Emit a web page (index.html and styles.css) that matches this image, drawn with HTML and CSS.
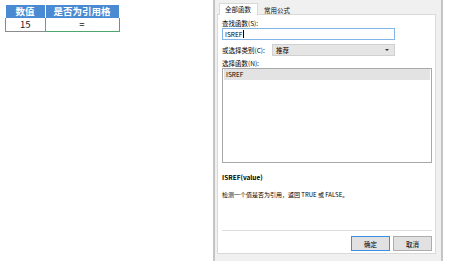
FILE: index.html
```html
<!DOCTYPE html>
<html lang="zh-CN">
<head>
    <meta charset="UTF-8">
    <meta name="viewport" content="width=device-width, initial-scale=1.0">
    <link rel="stylesheet" href="styles.css">
    <title>插入函数</title>
</head>
<body>
    <div class="sheet">
        <table class="grid">
            <tr>
                <th class="col-a">数值</th>
                <th class="col-b">是否为引用格</th>
            </tr>
            <tr>
                <td>15</td>
                <td class="active">=</td>
            </tr>
        </table>
    </div>

    <div class="dialog">
        <div class="tabs">
            <div class="tab tab-on">全部函数</div>
            <div class="tab">常用公式</div>
        </div>
        <div class="panel">
            <div class="lbl lbl-first">查找函数(S):</div>
            <div class="search">ISREF<span class="caret"></span></div>

            <div class="cat-row">
                <span class="lbl">或选择类别(C):</span>
                <div class="select">
                    <span>推荐</span>
                    <span class="arrow"></span>
                </div>
            </div>

            <div class="lbl lbl-list">选择函数(N):</div>
            <div class="list">
                <div class="item item-on">ISREF</div>
            </div>

            <div class="sig">ISREF(value)</div>
            <div class="desc">检测一个值是否为引用，返回 TRUE 或 FALSE。</div>

            <div class="sep"></div>
            <div class="buttons">
                <button class="btn btn-ok">确定</button>
                <button class="btn">取消</button>
            </div>
        </div>
    </div>
</body>
</html>
```

FILE: styles.css
```css
body {
    margin: 0;
    width: 450px;
    height: 261px;
    display: flex;
    background-color: #fff;
    font-family: "Noto Sans CJK SC", "Noto Sans", sans-serif;
    overflow: hidden;
}

/* spreadsheet part */
.sheet {
    width: 213px;
    padding: 5px 0 0 5px;
    box-sizing: border-box;
}

.grid {
    border-collapse: collapse;
    font-size: 9.5px;
}

.grid th {
    background-color: #4a8ad2;
    color: #fff;
    font-weight: bold;
    height: 13px;
    padding: 0;
    line-height: 13px;
    border-right: 1px solid #fff;
}

.col-a {
    width: 39px;
}

.col-b {
    width: 73px;
}

.grid td {
    height: 13px;
    padding: 0;
    line-height: 13px;
    text-align: center;
    color: #222;
    border-left: 1px solid #8c8c8c;
    border-bottom: 1px solid #8c8c8c;
}

.grid td.active {
    border-right: 1px solid #4ea56e;
    border-bottom: 1px solid #4ea56e;
}

/* dialog */
.dialog {
    width: 230px;
    height: 261px;
    box-sizing: border-box;
    background-color: #f0f0f0;
    border-left: 2px solid #c4c4c4;
    border-right: 2px solid #c4c4c4;
    padding: 0 5px 7px 2px;
    display: flex;
    flex-direction: column;
    font-size: 6.5px;
    color: #000;
}

.tabs {
    display: flex;
    height: 14px;
    padding-left: 2px;
    align-items: flex-end;
}

.tab {
    height: 10px;
    line-height: 10px;
    padding: 0 6px;
    color: #111;
    margin-bottom: -1px;
}

.tab-on {
    background-color: #fff;
    border: 1px solid #d9d9d9;
    border-bottom: none;
    height: 11px;
    padding: 0 6px 0 5px;
    position: relative;
    z-index: 1;
}

.panel {
    flex: 1;
    background-color: #fff;
    border: 1px solid #d9d9d9;
    padding: 0 3px 1px 4px;
    display: flex;
    flex-direction: column;
}

.lbl {
    height: 8px;
    line-height: 8px;
    white-space: nowrap;
}

.lbl-first {
    margin-top: 4px;
}

.search {
    margin-top: 1px;
    width: 173px;
    height: 12px;
    box-sizing: border-box;
    border: 1px solid #7fb5e8;
    line-height: 10px;
    padding-left: 2px;
    display: flex;
    align-items: center;
}

.caret {
    width: 1px;
    height: 8px;
    background-color: #000;
    margin-left: 1px;
}

.cat-row {
    margin-top: 4px;
    display: flex;
    align-items: center;
    width: 173px;
    justify-content: space-between;
}

.select {
    width: 123px;
    height: 12px;
    box-sizing: border-box;
    background-color: #e5e5e5;
    border: 1px solid #d0d0d0;
    display: flex;
    align-items: center;
    justify-content: space-between;
    padding: 0 5px 0 3px;
}

.arrow {
    width: 0;
    height: 0;
    border-left: 2px solid transparent;
    border-right: 2px solid transparent;
    border-top: 2px solid #333;
}

.lbl-list {
    margin-top: 3px;
}

.list {
    margin-top: 1px;
    height: 95px;
    box-sizing: border-box;
    border: 1px solid #a8a8a8;
    padding: 0 1px;
}

.item {
    height: 11px;
    line-height: 11px;
    padding-left: 2px;
}

.item-on {
    background-color: #e3e3e3;
}

.sig {
    margin-top: 10px;
    font-weight: bold;
    line-height: 8px;
}

.desc {
    margin-top: 10px;
    line-height: 8px;
    font-size: 6px;
}

.sep {
    margin-top: auto;
    height: 1px;
    background-color: #dcdcdc;
}

.buttons {
    margin-top: 5px;
    display: flex;
    justify-content: flex-end;
    gap: 3px;
    margin-bottom: 1px;
}

.btn {
    width: 39px;
    height: 15px;
    padding: 0;
    font-family: inherit;
    font-size: 6.5px;
    color: #000;
    background-color: #e1e1e1;
    border: 1px solid #adadad;
}

.btn-ok {
    border: 1px solid #3d8ee0;
}
```
